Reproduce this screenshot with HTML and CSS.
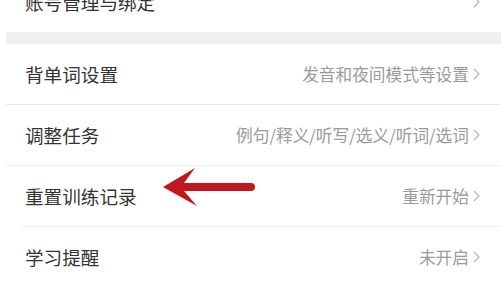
FILE: index.html
```html
<!DOCTYPE html>
<html lang="zh-CN">
<head>
<meta charset="utf-8">
<link rel="stylesheet" href="styles.css">
</head>
<body>
<div class="page">
  <div class="group">
    <div class="row">
      <span class="label">账号管理与绑定</span>
      <span class="value"><svg class="chev" viewBox="0 0 7 12"><polyline points="1,1 6,6 1,11"/></svg></span>
    </div>
  </div>
  <div class="gap"></div>
  <div class="group">
    <div class="row">
      <span class="label">背单词设置</span>
      <span class="value">发音和夜间模式等设置<svg class="chev" viewBox="0 0 7 12"><polyline points="1,1 6,6 1,11"/></svg></span>
    </div>
    <div class="divider"></div>
    <div class="row">
      <span class="label">调整任务</span>
      <span class="value">例句/释义/听写/选义/听词/选词<svg class="chev" viewBox="0 0 7 12"><polyline points="1,1 6,6 1,11"/></svg></span>
    </div>
    <div class="divider"></div>
    <div class="row annotated">
      <span class="label">重置训练记录</span>
      <span class="value">重新开始<svg class="chev" viewBox="0 0 7 12"><polyline points="1,1 6,6 1,11"/></svg></span>
      <svg class="arrow" viewBox="0 0 100 44"><path d="M2 21 L34 2 L23 17 L90 17 A4 4 0 0 1 90 25 L23 25 L36 40 Z"/></svg>
    </div>
    <div class="divider inset"></div>
    <div class="row">
      <span class="label">学习提醒</span>
      <span class="value">未开启<svg class="chev" viewBox="0 0 7 12"><polyline points="1,1 6,6 1,11"/></svg></span>
    </div>
  </div>
</div>
</body>
</html>
```

FILE: styles.css
```css
html, body {
  margin: 0;
  padding: 0;
  background: #ffffff;
  overflow: hidden;
}
body {
  font-family: "Noto Sans CJK SC", "Noto Sans", sans-serif;
}
.page {
  margin-top: -28px;
  margin-left: 6px;
  display: flex;
  flex-direction: column;
}
.group {
  display: flex;
  flex-direction: column;
  background: #fff;
}
.row {
  height: 60px;
  display: flex;
  align-items: center;
  justify-content: space-between;
  padding: 0 21px 0 19px;
}
.row.annotated {
  position: relative;
}
.label {
  font-size: 18.6px;
  color: #333333;
  line-height: 1;
}
.value {
  display: flex;
  align-items: center;
  font-size: 16.7px;
  color: #9a9a9a;
  line-height: 1;
}
.chev {
  width: 7px;
  height: 12px;
  margin-left: 4px;
  fill: none;
  stroke: #b8b8b8;
  stroke-width: 1.3;
}
.gap {
  height: 12px;
  background: #f0f0f0;
}
.divider {
  height: 1px;
  background: #ececec;
}
.divider.inset {
  margin-left: 16px;
}
.arrow {
  position: absolute;
  left: 155px;
  top: 0;
  width: 100px;
  height: 44px;
  fill: #c2181d;
}
```
